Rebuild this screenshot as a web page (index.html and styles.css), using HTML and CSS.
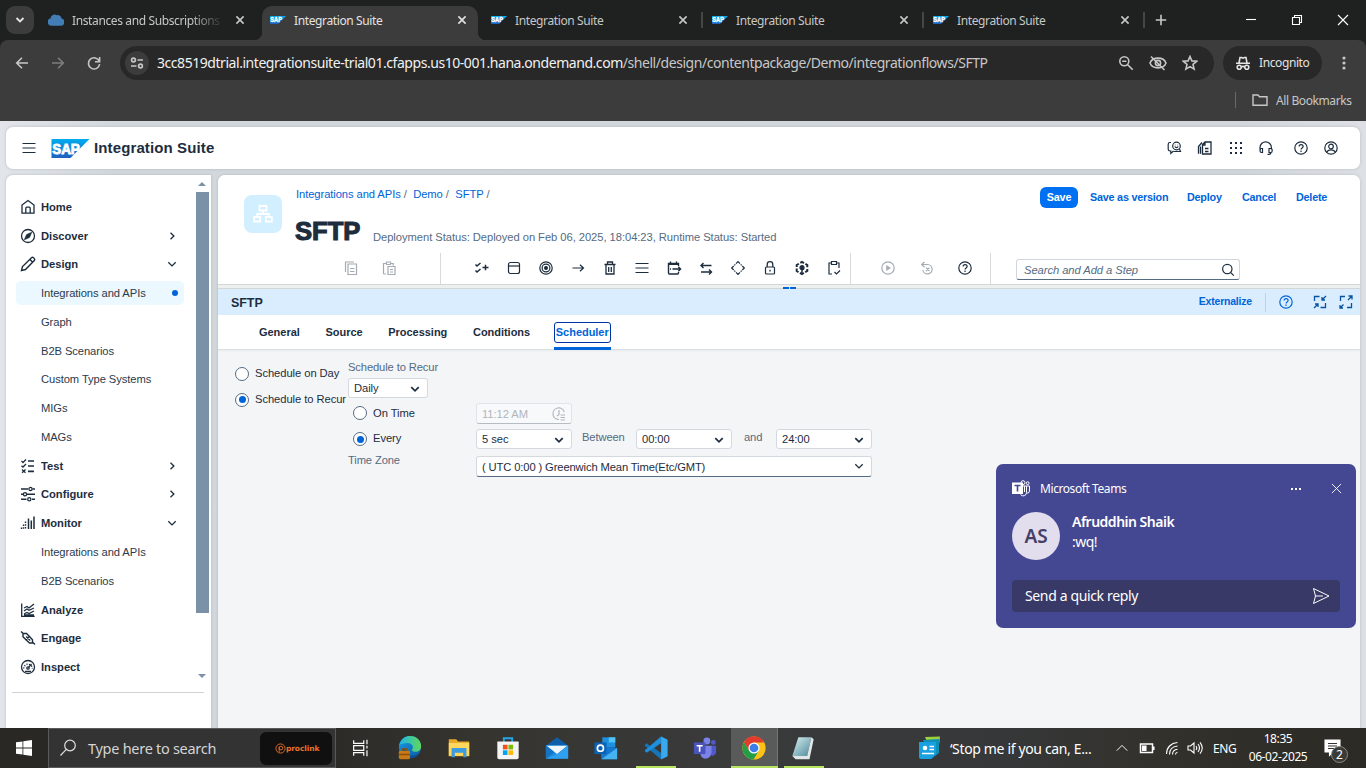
FILE: index.html
```html
<!DOCTYPE html>
<html lang="en">
<head>
<meta charset="utf-8">
<title>Integration Suite</title>
<link rel="stylesheet" href="styles.css">
</head>
<body>
<svg class="defs" aria-hidden="true">
  <defs>
    <linearGradient id="sapg" x1="0" y1="0" x2="0" y2="1"><stop offset="0" stop-color="#00aeef"/><stop offset="1" stop-color="#1f5fbf"/></linearGradient>
    <linearGradient id="edgeg" x1="0" y1="0" x2="1" y2="1"><stop offset="0" stop-color="#1b9de2"/><stop offset="1" stop-color="#0c59a4"/></linearGradient>
    <linearGradient id="edgeg2" x1="0" y1="0" x2="1" y2="0"><stop offset="0" stop-color="#1fb6e8"/><stop offset="1" stop-color="#5fd85a"/></linearGradient>
    <linearGradient id="padg" x1="0" y1="0" x2="1" y2="1"><stop offset="0" stop-color="#d9f0f4"/><stop offset="1" stop-color="#4d8a99"/></linearGradient>
  </defs>
  <symbol id="sap" viewBox="0 0 38 19"><path d="M0 0h38L19 19H0z" fill="url(#sapg)"/><text x="0.8" y="15" font-family="Liberation Sans" font-weight="700" font-size="15.5" textLength="27.500" lengthAdjust="spacingAndGlyphs" fill="#fff" stroke="#fff" stroke-width=".9">SAP</text></symbol>
  <symbol id="x" viewBox="0 0 16 16"><path d="M4.400 4.400l7.200 7.200M11.600 4.400l-7.200 7.200"/></symbol>
  <symbol id="down" viewBox="0 0 16 16"><path d="M4.300 6.200l3.700 3.700 3.700-3.700"/></symbol>
  <symbol id="right" viewBox="0 0 16 16"><path d="M6.500 4.700L9.900 8 6.500 11.300"/></symbol>
  <symbol id="help" viewBox="0 0 16 16"><circle cx="8" cy="8" r="6.200"/><path d="M6.100 6.500c0-2.600 4-2.500 4-.1 0 1.500-2 1.500-2 3M8 10.600v1.300"/></symbol>
</svg>

<header class="browser">
  <div class="tabstrip">
    <button class="tabsearch"><svg class="i" viewBox="0 0 16 16"><path d="M4.500 6l3.500 3.500L11.500 6"/></svg></button>
    <div class="tab first"><svg class="fav" viewBox="0 0 16 16"><path d="M3.500 13.800a3.800 3.800 0 0 1-.9-7.500A4 4 0 0 1 8.800 3.200a3.700 3.700 0 0 1 4.700 3.300A3.700 3.700 0 0 1 13 13.800z" fill="#437db5"/></svg><span class="ttl fade">Instances and Subscriptions -</span><svg class="i cx"><use href="#x"/></svg></div>
    <div class="tab active"><svg class="fav"><use href="#sap"/></svg><span class="ttl">Integration Suite</span><svg class="i cx"><use href="#x"/></svg></div>
    <div class="tab sep"><svg class="fav"><use href="#sap"/></svg><span class="ttl">Integration Suite</span><svg class="i cx"><use href="#x"/></svg></div>
    <div class="tab sep"><svg class="fav"><use href="#sap"/></svg><span class="ttl">Integration Suite</span><svg class="i cx"><use href="#x"/></svg></div>
    <div class="tab sep"><svg class="fav"><use href="#sap"/></svg><span class="ttl">Integration Suite</span><svg class="i cx"><use href="#x"/></svg></div>
    <svg class="i plus" viewBox="0 0 16 16"><path d="M8 2.800v10.400M2.800 8h10.400"/></svg>
    <div class="winctl">
      <svg viewBox="0 0 16 16"><path d="M3 7.500h10"/></svg>
      <svg viewBox="0 0 16 16"><path d="M3.500 5.500h7v7h-7zM5.500 5.500v-2h7v7h-2"/></svg>
      <svg viewBox="0 0 16 16"><path d="M3 3l10 10M13 3L3 13"/></svg>
    </div>
  </div>
  <div class="toolbar">
    <svg class="i nav" viewBox="0 0 16 16"><path d="M14 8H3M8 2.700L2.700 8 8 13.300"/></svg>
    <svg class="i nav dim" viewBox="0 0 16 16"><path d="M2 8h11M8 2.700L13.300 8 8 13.300"/></svg>
    <svg class="i nav" viewBox="0 0 16 16"><path d="M13.300 6.500A5.600 5.600 0 1 0 13.600 9M13.600 2v4.800H9"/></svg>
    <div class="omni">
      <span class="site"><svg class="i" viewBox="0 0 16 16"><circle cx="4.500" cy="5" r="1.900"/><path d="M8.500 5H14M2 11h5.500"/><circle cx="11.500" cy="11" r="1.900"/></svg></span>
      <span class="url"><b>3cc8519dtrial.integrationsuite-trial01.cfapps.us10-001.hana.ondemand.com</b>/shell/design/contentpackage/Demo/integrationflows/SFTP</span>
      <svg class="i" viewBox="0 0 16 16"><circle cx="6.300" cy="6.300" r="4.500"/><path d="M9.700 9.700l5 5M4.200 6.300h4.200"/></svg>
      <svg class="i eye" viewBox="0 0 18 16"><path d="M1 8c2.500-6.500 13.500-6.500 16 0-2.500 6.500-13.500 6.500-16 0z"/><circle cx="9" cy="8" r="2.600"/><path d="M2 1.500l13.500 13.500"/></svg>
      <svg class="i" viewBox="0 0 16 16"><path d="M8 1.500l1.900 4.400 4.700.4-3.600 3.100 1.100 4.700L8 11.600l-4.100 2.500L5 9.400 1.400 6.300l4.700-.4z"/></svg>
    </div>
    <div class="incog"><svg class="i" viewBox="0 0 16 16"><path d="M1 8.200h14M4 8l1-5.500h1.500l1.500.7 1.500-.7H11L12 8M6.200 12.200c1-.9 2.600-.9 3.600 0"/><circle cx="4.200" cy="12.300" r="2"/><circle cx="11.800" cy="12.300" r="2"/></svg><span>Incognito</span></div>
    <svg class="dots" viewBox="0 0 16 16"><circle cx="8" cy="3" r="1.600"/><circle cx="8" cy="8" r="1.600"/><circle cx="8" cy="13" r="1.600"/></svg>
  </div>
  <div class="bookmarks"><i></i><svg class="i" viewBox="0 0 16 16"><path d="M1 3v10.200h14V4.700H7.500L6 3z"/></svg><span>All Bookmarks</span></div>
</header>

<div class="app">
  <div class="shell">
    <svg class="s" viewBox="0 0 16 16"><path d="M1.500 3.500h13M1.500 8h13M1.500 12.500h13"/></svg>
    <svg class="logo"><use href="#sap"/></svg>
    <h1>Integration Suite</h1>
    <div class="shellicons">
      <svg class="s" viewBox="0 0 16 16"><path d="M4 2.500H3a1.800 1.800 0 0 0-1.800 1.800v5A1.800 1.800 0 0 0 3 11h.800v2.500L6.500 11"/><circle cx="9.500" cy="6" r="3.800"/><path d="M7.800 6.500c.8 1.500 2.600 1.500 3.400 0M8.300 4.800v.4M10.700 4.800v.4M6.500 11.500h7l-1-2.500"/></svg>
      <svg class="s" viewBox="0 0 16 16"><path d="M8 2H14v12H5.500V4.500zM8 2v3H5.500M1.500 13.800V6.500L5 2.500M3.500 13.800V6.500M8 8.500H11.500M8 11.500H11.500" stroke-width="1.300"/></svg>
      <svg class="s fillonly" viewBox="0 0 16 16"><path d="M2 2h2v2H2zM7 2h2v2H7zM12 2h2v2H12zM2 7h2v2H2zM7 7h2v2H7zM12 7h2v2H12zM2 12h2v2H2zM7 12h2v2H7zM12 12h2v2H12z"/></svg>
      <svg class="s" viewBox="0 0 16 16"><path d="M2 9.500V7.500a5.700 5.700 0 0 1 11.400 0v2M2.500 8.500h2v4h-1c-1 0-1.500-.8-1.500-2zM13 8.500h-2v4h2c1 0 1.200-.8 1.200-2s-.2-2-1.200-2zM13 12.500c0 1.500-1.500 2-3.500 2"/></svg>
      <svg class="s gap"><use href="#help"/></svg>
      <svg class="s" viewBox="0 0 16 16"><circle cx="8" cy="8" r="6.200"/><circle cx="8" cy="6.500" r="2.300"/><path d="M3.800 12.200c.8-2 2-2.400 4.200-2.400s3.400.4 4.200 2.400"/></svg>
    </div>
  </div>

  <div class="cols">
    <aside class="side">
      <nav>
        <a class="top"><svg class="s" viewBox="0 0 16 16"><path d="M2 14.200V6L8 1.500 14 6v8.200zM5.800 14V9.200q0-1 1-1h2.400q1 0 1 1V14"/></svg>Home</a>
        <a class="top"><svg class="s" viewBox="0 0 16 16"><circle cx="8" cy="8" r="6.500"/><path d="M11.800 4.200L9.500 9.500 4.300 11.800l2.300-5.300z" fill="currentColor" stroke-width=".6"/></svg>Discover<svg class="s ch"><use href="#right"/></svg></a>
        <a class="top"><svg class="s" viewBox="0 0 16 16"><path d="M1.500 14.500l1-4L11.500 1.800q1-.9 2 0l.8.800q.8 1 0 2L5.500 13.500zM10 3.500l2.700 2.700" stroke-width="1.400"/></svg>Design<svg class="s ch"><use href="#down"/></svg></a>
        <a class="sub on">Integrations and APIs<i></i></a>
        <a class="sub">Graph</a>
        <a class="sub">B2B Scenarios</a>
        <a class="sub">Custom Type Systems</a>
        <a class="sub">MIGs</a>
        <a class="sub">MAGs</a>
        <a class="top"><svg class="s" viewBox="0 0 16 16"><path d="M1.500 3l1.500 1.500L6 1.500M1.500 7.700L3 9l3-3M2 11.500l3.500 3.200M5.500 11.500L2 14.700" /><path d="M8 3h6M8 8h6M8 13.300h6" stroke-width="1.700"/></svg>Test<svg class="s ch"><use href="#right"/></svg></a>
        <a class="top"><svg class="s" viewBox="0 0 16 16"><path d="M1 3h7M12.500 3H15M1 8.300h2M7 8.300h8M1 13.300h5.500M12 13.300h3" stroke-width="1.400"/><circle cx="10.500" cy="3" r="1.600"/><circle cx="5" cy="8.300" r="1.600"/><circle cx="9.300" cy="13.300" r="1.600"/></svg>Configure<svg class="s ch"><use href="#right"/></svg></a>
        <a class="top"><svg class="s" viewBox="0 0 16 16"><path d="M14 1.500v12.500M11.300 5.500v8.500M8.500 3.500v10.500" stroke-width="1.500"/><path d="M5.500 6.500v8M3.500 9.500v5M1.500 12.500v2" stroke-dasharray="1.500 1.200" stroke-width="1.400"/></svg>Monitor<svg class="s ch"><use href="#down"/></svg></a>
        <a class="sub">Integrations and APIs</a>
        <a class="sub">B2B Scenarios</a>
        <a class="top"><svg class="s" viewBox="0 0 16 16"><path d="M1.700 1.500v12.800h13M4 6l3-1.500 2 1.500 5-4M4 9l3-2 2 1.300L14 6M4 12l3-1.500 2 1 5-2.500M4 13h10"/></svg>Analyze</a>
        <a class="top"><svg class="s" viewBox="0 0 16 16"><path d="M1 1.500l2.500 2.300M12.500 12l2.500 2.500M3 6.800V3.500h3.500l3 3-3.500 3.300zM6 9.800l3.500 3.200h3V9.700L9.500 6.500M6.200 6.500l4 4" stroke-width="1.400"/></svg>Engage</a>
        <a class="top"><svg class="s" viewBox="0 0 16 16"><circle cx="8" cy="8" r="6.500"/><circle cx="8" cy="9" r="1.200"/><path d="M8.800 8.200L11.500 5M5 12.300h6" /><path d="M3.700 9.500a4.300 4.300 0 0 1 8.600 0" stroke-dasharray="1.200 1.300"/></svg>Inspect</a>
      </nav>
      <div class="scroll"><b class="up"></b><b class="thumb"></b><b class="dn"></b></div>
      <hr>
    </aside>

    <main class="main">
      <section class="objhead">
        <div class="tile"><svg viewBox="0 0 20 20"><path d="M6.500 2h7v4.500h-7zM1.200 13h6v4.500h-6zM12.800 13h6v4.500h-6zM10 6.500V10M4.200 13v-3h11.600v3"/></svg></div>
        <div class="titles">
          <div class="crumb"><a>Integrations and APIs</a><em>/</em><a>Demo</a><em>/</em><a>SFTP</a><em>/</em></div>
          <div class="title"><h2>SFTP</h2><span>Deployment Status: Deployed on Feb 06, 2025, 18:04:23, Runtime Status: Started</span></div>
        </div>
        <div class="actions"><a class="save">Save</a><a class="w1">Save as version</a><a class="w2">Deploy</a><a class="w3">Cancel</a><a class="w4">Delete</a></div>
      </section>
      <section class="tools">
        <div class="g1">
          <svg class="s" viewBox="0 0 16 16"><path d="M5 4h8.500v10.500H5zM2.500 12V2h8.500M7 8.500h4.500M7 11.500h4.500"/></svg>
          <svg class="s" viewBox="0 0 16 16"><path d="M2.500 14V3.500h2.800M5.500 2h4v2.500h-4zM9.700 3.500h2.500v2M7 6.500h7v8H7zM9 9.500h3M9 12h3M2.500 14H5"/></svg>
        </div>
        <div class="g2">
          <svg class="s" viewBox="0 0 16 16"><path d="M1.500 4.500L3 6l3.500-3M1.500 10.500L3 12l3.500-3M8.500 7.500h6M11.500 4.800v5.400" stroke-width="1.500"/></svg>
          <svg class="s" viewBox="0 0 16 16"><rect x="2.500" y="2.500" width="11" height="11" rx="2"/><path d="M2.500 6h11"/></svg>
          <svg class="s" viewBox="0 0 16 16"><circle cx="8" cy="8" r="6.200"/><circle cx="8" cy="8" r="3.900"/><circle cx="8" cy="8" r="1.400" fill="currentColor"/></svg>
          <svg class="s" viewBox="0 0 16 16"><path d="M2.500 8h11M10 4.700L13.500 8 10 11.300"/></svg>
          <svg class="s" viewBox="0 0 16 16"><path d="M2.500 4.500h11M5.500 4.500v-2.500h5v2.500M4 4.500v9.500h8V4.500M6.700 7v5M9.300 7v5" stroke-width="1.300"/></svg>
          <svg class="s" viewBox="0 0 16 16"><path d="M1.500 3.500h13M1.500 8h13M1.500 12.500h13"/></svg>
          <svg class="s" viewBox="0 0 16 16"><path d="M12.500 6V3.500H2.500v9.500q0 1 1 1h8q1 0 1-1v-1M2.500 4.300h10M4.500 1.500v2M10.500 1.500v2M4 9h1M6.500 9h8M12.300 6.700L14.600 9l-2.300 2.300" stroke-width="1.400"/></svg>
          <svg class="s" viewBox="0 0 16 16"><path d="M13.500 5.500H3M5.500 3L3 5.500 5.500 8M3 12h10.500M11 9.500l2.500 2.500L11 14.500" stroke-width="1.400"/></svg>
          <svg class="s" viewBox="0 0 16 16"><path d="M6 3.700l2-2 2 2M12.300 6l2 2-2 2M10 12.300l-2 2-2-2M3.700 10l-2-2 2-2M5.300 4.400L4.400 5.300M10.700 4.400l.9.900M5.300 11.600l-.9-.9M10.700 11.600l.9-.9"/></svg>
          <svg class="s" viewBox="0 0 16 16"><rect x="3.500" y="7" width="9" height="7" rx="1"/><path d="M5.200 7V4.500a2.800 2.800 0 0 1 5.600 0V7M8 9.700v1.700" stroke-width="1.300"/></svg>
          <svg class="s" viewBox="0 0 16 16"><path d="M8 2l5.300 3v6L8 14l-5.300-3V5z" stroke-dasharray="4.500 1.600" stroke-dashoffset="2.200" stroke-width="2"/><circle cx="8" cy="7.700" r="2" fill="currentColor"/><path d="M8 10v3" stroke-width="1.500"/></svg>
          <svg class="s" viewBox="0 0 16 16"><path d="M6 14H3V3h2.500M10.500 3H13v5M5.500 1.500h5v3h-5zM8.500 12l2 2 3.500-3.500"/></svg>
        </div>
        <div class="g3">
          <svg class="s" viewBox="0 0 16 16"><circle cx="8" cy="8" r="6.200"/><path d="M6.500 5.500v5L10.500 8z" fill="currentColor" stroke-width=".6"/></svg>
          <svg class="s" viewBox="0 0 16 16"><path d="M3.500 4.500h5a4.700 4.700 0 1 1-4.700 5.500M5.500 2L2.700 4.500l2.800 2.700M7 7.700l3.500 3.500M10.500 7.700L7 11.200"/></svg>
          <svg class="s dark"><use href="#help"/></svg>
        </div>
        <div class="search"><span>Search and Add a Step</span><svg class="s" viewBox="0 0 16 16"><circle cx="7.300" cy="7" r="4.700"/><path d="M10.800 10.600l3 3"/></svg></div>
      </section>
      <div class="split"><i></i></div>
      <section class="phead"><b>SFTP</b><a>Externalize</a><i></i>
        <svg class="s"><use href="#help"/></svg>
        <svg class="s c" viewBox="0 0 16 16"><path d="M7.500 2.500H2.500V7M8.500 13.500h5V9M14 2L10 6M10 3v3h3M2 14L6 10M3 10H6v3" stroke-width="1.300"/></svg>
        <svg class="s d" viewBox="0 0 16 16"><path d="M7 2.500H2.500V7M9 13.500h4.500V9M10 6l4-4M10.500 2h3.500v3.500M5.500 10.500L2 14M2 11v3h3" stroke-width="1.300"/></svg>
      </section>
      <section class="ptabs"><a>General</a><a>Source</a><a>Processing</a><a>Conditions</a><a class="cur">Scheduler</a></section>
      <section class="form">
        <div class="modes"><label><i class="radio"></i><span>Schedule on Day</span></label><label><i class="radio on"></i><span>Schedule to Recur</span></label></div>
        <div class="recur">
          <div class="lbl r0">Schedule to Recur</div>
          <div class="sel daily">Daily<svg class="s"><use href="#down"/></svg></div>
          <div class="row r1"><label><i class="radio"></i>On Time</label><div class="time">11:12 AM<svg class="s" viewBox="0 0 16 16"><path d="M8 13.500A5.800 5.800 0 1 1 13.300 6M8 4v4.500L6 10M9.500 9H14M9.500 11.500H14M9.500 14H14"/></svg></div></div>
          <div class="row r2"><label><i class="radio on"></i><span>Every</span></label><div class="sel">5 sec<svg class="s"><use href="#down"/></svg></div><span class="lbl bt">Between</span><div class="sel">00:00<svg class="s"><use href="#down"/></svg></div><span class="lbl an">and</span><div class="sel">24:00<svg class="s"><use href="#down"/></svg></div></div>
          <div class="row r3"><span class="lbl tz">Time Zone</span><div class="sel zone">( UTC 0:00 ) Greenwich Mean Time(Etc/GMT)<svg class="s"><use href="#down"/></svg></div></div>
        </div>
      </section>
    </main>
  </div>
</div>

<div class="toast">
  <div class="thead"><svg class="tm" viewBox="0 0 18 17"><circle cx="11" cy="2.700" r="2" fill="none" stroke="#fff"/><circle cx="15.700" cy="3.200" r="1.400" fill="none" stroke="#fff"/><path d="M11 6h3.500v6.500a3.300 3.300 0 0 1-6 2M14.500 6H17.500V11q0 2-2.500 2.200M12.500 6v6" fill="none" stroke="#fff"/><path d="M0 2.500h11v11.500H0z" fill="#fff"/><path d="M2.500 5.500h6M5.500 5.500v6" stroke="#444791" stroke-width="1.600"/></svg><span>Microsoft Teams</span><em><u></u><u></u><u></u></em><svg class="tx" viewBox="0 0 12 12"><path d="M1 1l10 10M11 1L1 11"/></svg></div>
  <div class="tbody"><div class="av">AS</div><div class="msg"><b>Afruddhin Shaik</b><span>:wq!</span></div></div>
  <div class="reply"><span>Send a quick reply</span><svg viewBox="0 0 18 18"><path d="M1.500 1.500L17 9 1.500 16.500 3.500 9zM3.500 9H11"/></svg></div>
</div>

<footer class="taskbar">
  <div class="start"><svg viewBox="0 0 16 16"><path d="M0 2.300l6.500-.9v6.100H0zM7.300 1.300L16 0v7.500H7.300zM0 8.400h6.500v6.200L0 13.700zM7.300 8.400H16V16l-8.700-1.300z" fill="#fff"/></svg></div>
  <div class="tsearch"><svg viewBox="0 0 18 18"><circle cx="11" cy="6.500" r="5.300"/><path d="M7.300 10.400L1.500 16.500"/></svg><span>Type here to search</span><div class="pro"><svg viewBox="0 0 12 12"><circle cx="6" cy="6" r="5"/><circle cx="6.500" cy="5.500" r="2"/><path d="M4.500 4v6"/></svg>proclink</div></div>
  <div class="apps">
    <div class="app-i"><svg viewBox="0 0 24 24"><path d="M4 3.500v3.500h11V3.500M4 20.500V17h11v3.500M4 9.500h11v5H4zM18.500 3v5M18.500 14.500V21M18.500 9.500v3" fill="none" stroke="#fff" stroke-width="1.300"/></svg></div>
    <div class="app-i"><svg viewBox="0 0 28 28"><circle cx="14" cy="13" r="12" fill="url(#edgeg)"/><path d="M2.500 11C4 3.500 10 1 14.500 1 21 1 26 6 26 12c0 4-3 6-6 6-3.500 0-4.500-1.500-3.500-3 2-3-1-6.500-5-6.500-4 0-7.500 1-9 2.500z" fill="url(#edgeg2)"/><path d="M9 15c0 5 4 7.500 9 7 2 0 4-1 5-2-1 3-5 5-9 5-6 0-9-5-8-9z" fill="#0b4f94"/><rect x="2" y="17" width="12" height="9" rx="1.500" fill="#c97a16"/><path d="M5.500 17v-2h5v2M2 21h12" stroke="#8b4f09" fill="none" stroke-width="1.500"/></svg></div>
    <div class="app-i"><svg viewBox="0 0 28 28"><path d="M3 4.500h8l2 2.500h12v16H3z" fill="#e9a825"/><path d="M3 8.500h22v14H3z" fill="#ffd75e"/><path d="M6 14h16v10h-3.500v-5h-9v5H6z" fill="#3d9be0"/></svg></div>
    <div class="app-i"><svg viewBox="0 0 28 28"><path d="M9.500 8V3.500h9V8" fill="none" stroke="#24a7e8" stroke-width="2"/><path d="M2.500 7h23v17q0 2-2 2h-19q-2 0-2-2z" fill="#f4f4f4"/><path d="M8.500 10.500h5v5h-5z" fill="#f25022"/><path d="M14.500 10.500h5v5h-5z" fill="#7fba00"/><path d="M8.500 16.500h5v5h-5z" fill="#00a4ef"/><path d="M14.500 16.500h5v5h-5z" fill="#ffb900"/></svg></div>
    <div class="app-i"><svg viewBox="0 0 28 28"><path d="M2 11.500L14 2.500l12 9z" fill="#0c5ea8"/><path d="M2 11v14.500h24V11z" fill="#1b8ae0"/><path d="M3 11.500h22L14 20.500z" fill="#eef5fb"/><path d="M2 11.500l9 7L2 25.500z" fill="#1673c4"/><path d="M14 20.500l12-9v14H2z" fill="#35a5f2" opacity=".8"/></svg></div>
    <div class="app-i"><svg viewBox="0 0 28 28"><path d="M10 2.500h14v11H10z" fill="#1e90df"/><path d="M17 2.500h7v5.500h-7z" fill="#50c4f7"/><path d="M8 12l18 2v12H9z" fill="#1478cf"/><path d="M9 26l17-12v12z" fill="#45b2f2"/><path d="M1.500 8h13v12.500h-13z" fill="#0a63b5"/><circle cx="8" cy="14.200" r="3.300" fill="none" stroke="#fff" stroke-width="1.800"/></svg></div>
    <div class="app-i run"><svg viewBox="0 0 28 28"><path d="M19.500 1.500L8 12 4 9 2 10.500v1L19.500 26.500v-7L12 14l7.500-5.500z" fill="#1674b8"/><path d="M2 17.500L4 19l15.500-10.500V1.500L2 16.500z" fill="#1e8fd8"/><path d="M19.500 1.500L26.500 5v18l-7 3.500z" fill="#38a9ef"/></svg></div>
    <div class="app-i"><svg viewBox="0 0 28 28"><circle cx="16" cy="6.500" r="3.700" fill="#7b83eb"/><circle cx="23" cy="8" r="2.600" fill="#5059c9"/><path d="M19 11.500h7v7q-1 4-5 4z" fill="#5059c9"/><path d="M9 11.500h12v8q-1 6-7 6-5-1-5-6z" fill="#7b83eb"/><path d="M2 8h12.500v12.500H2z" fill="#4b53bc"/><path d="M5 11.500h6.500M8.200 11.500v6.500" stroke="#fff" stroke-width="1.700"/></svg></div>
    <div class="app-i run focus"><svg viewBox="0 0 28 28"><circle cx="14" cy="14" r="12.500" fill="#fbc116"/><path d="M14 8h11A12.500 12.500 0 0 0 3.200 7.700l5.600 9.300z" fill="#e33b2e"/><path d="M3.200 7.700A12.500 12.500 0 0 0 13.500 26.500l5.700-9.500h-10.400z" fill="#229e47"/><circle cx="14" cy="14" r="6" fill="#fff"/><circle cx="14" cy="14" r="4.700" fill="#3b7de9"/></svg></div>
    <div class="app-i run"><svg viewBox="0 0 28 28"><path d="M9 2.500h14l-4.500 20H2.500z" fill="url(#padg)"/><path d="M23 2.500l2.500 2L21 26l-2.500-3.500zM2.500 22.500h16L21 26H6z" fill="#e0e6e8"/></svg></div>
  </div>
  <div class="news"><svg viewBox="0 0 24 24"><path d="M7 1l15-.5-2 17-5 2z" fill="#9ed23c"/><path d="M5 4l16-1v14l-8 6z" fill="#0f8fb8"/><path d="M1 6h17v12l-5 5H3q-2 0-2-2z" fill="#18a0e0"/><circle cx="7" cy="12" r="2.300" fill="#fff"/><path d="M11.500 10.500H16M11.500 13.500H16M4 17.500h12" stroke="#fff" stroke-width="1.500"/></svg><span>‘Stop me if you can, E...</span></div>
  <div class="tray">
    <svg class="a" viewBox="0 0 16 16"><path d="M2 11l6-6 6 6"/></svg>
    <svg class="b" viewBox="0 0 16 16"><path d="M1.500 4h12v8.500H1.500zM14.800 6.500v3.500" stroke-width="1.500"/><path d="M3.500 6h3.500v4.500H3.500z" fill="#fff"/></svg>
    <svg class="c" viewBox="0 0 16 16"><path d="M2.500 14C2.500 7.500 7 3 13.500 2.500M5.500 14.500c0-5 3-8 8-8.500M8.500 14.500c0-3 2-5 5-5.300M11.500 14.500c0-1.200.8-2 2-2.200"/></svg>
    <svg class="d" viewBox="0 0 16 16"><path d="M1 6v4h2.500L7 13V3L3.500 6zM9 6q1.500 2 0 4M11 4q3 4 0 8M13 2.300q4.500 5.700 0 11.400"/></svg>
    <span class="eng">ENG</span>
    <div class="clock"><span>18:35</span><span>06-02-2025</span></div>
    <div class="note"><svg viewBox="0 0 18 18"><path d="M1 1h15v12H9l-3.500 3.500V13H1z" fill="#fff"/><path d="M4 4.500h9M4 7h9M4 9.500h6" stroke="#333" stroke-width="1.100"/></svg><b>2</b></div>
  </div>
</footer>
</body>
</html>
```
FILE: styles.css
```css
* { box-sizing: border-box; }
body { margin: 0; width: 1366px; height: 768px; overflow: hidden; display: flex; flex-direction: column; font-family: "Liberation Sans", sans-serif; font-size: 11.2px; color: #1d2d3e; white-space: nowrap; }
svg { display: block; flex: none; }
a { color: inherit; text-decoration: none; }
.defs { width: 0; height: 0; position: absolute; }
.i { width: 16px; height: 16px; fill: none; stroke: #c7c7c7; stroke-width: 1.6; }
.s { width: 16px; height: 16px; fill: none; stroke: currentColor; stroke-width: 1.2; }

/* browser chrome */
.browser { height: 121px; background: #1f2120; font-family: "Noto Sans", sans-serif; color: #c7c7c7; flex: none; }
.tabstrip { height: 40px; display: flex; align-items: center; padding-left: 6px; }
.tabsearch { width: 28px; height: 28px; border: 0; border-radius: 9px; background: #3c3c3c; padding: 6px; margin-right: 7px; }
.tabsearch .i { stroke: #e3e3e3; stroke-width: 1.9; }
.tab { width: 221px; height: 40px; display: flex; align-items: center; padding-left: 8px; position: relative; }
.first .fav { margin-left: -1px; }
.fav { width: 16px; height: 16px; margin-right: 8px; }
.ttl { width: 152px; font-size: 12px; letter-spacing: -.38px; margin-right: 8px; }
.fade { -webkit-mask-image: linear-gradient(90deg, #000 78%, transparent 100%); }
.cx { width: 16px; height: 16px; }
.active .ttl { color: #e3e3e3; }
.active .cx { stroke: #e3e3e3; }
.active::before { content: ""; position: absolute; left: 0; top: 6px; width: 216px; height: 34px; background: #3c3c3c; border-radius: 10px 10px 0 0; }
.active::after { content: ""; position: absolute; left: -8px; top: 32px; width: 232px; height: 8px; background: radial-gradient(circle at 0 0, transparent 8px, #3c3c3c 8.500px) left / 8px 8px no-repeat, radial-gradient(circle at 100% 0, transparent 8px, #3c3c3c 8.500px) right / 8px 8px no-repeat; }
.active > * { position: relative; z-index: 1; }
.sep::after { content: ""; position: absolute; left: 218px; top: 12px; width: 1.500px; height: 16px; background: #454746; }
.plus { margin-left: 7px; }
.winctl { margin-left: auto; display: flex; gap: 30px; padding-right: 15px; }
.winctl svg { width: 16px; height: 16px; fill: none; stroke: #fff; stroke-width: 1.1; }
.toolbar { height: 46px; background: #3c3c3c; border-radius: 8px 8px 0 0; display: flex; align-items: center; padding-left: 14px; }
.nav { margin-right: 20px; }
.dim { stroke: #7d7d7d; }
.omni { margin-left: -2px; width: 1094px; height: 34px; border-radius: 17px; background: #282828; display: flex; align-items: center; padding-left: 5px; gap: 16px; }
.site { width: 24px; height: 24px; border-radius: 12px; background: #3c3c3c; padding: 4px; margin-right: -8px; }
.url { font-size: 14px; width: 953px; letter-spacing: -.45px; margin-right: -8px; padding-bottom: 2px; }
.url b { font-weight: 400; color: #f1f1f1; }
.omni .eye { width: 18px; margin: 0 -1px; }
.incog { margin-left: 9px; width: 99px; height: 34px; border-radius: 17px; background: #282828; display: flex; align-items: center; gap: 8px; padding-left: 12px; font-size: 12px; color: #e3e3e3; }
.incog span { letter-spacing: -.4px; padding-bottom: 2px; }
.incog .i { stroke: #e3e3e3; }
.dots { width: 16px; height: 16px; margin-left: 14px; fill: #c7c7c7; }
.bookmarks { height: 35px; background: #3c3c3c; display: flex; align-items: center; justify-content: flex-end; padding: 0 15px 7px 0; font-size: 12px; }
.bookmarks i { width: 1.500px; height: 16px; background: #6a6a6a; margin-right: 16px; }
.bookmarks .i { margin-right: 8px; stroke-width: 1.4; }
.bookmarks span { width: 75px; letter-spacing: -.4px; }

/* application */
.app { height: 607px; background: linear-gradient(90deg, #e2e5e9 0, #d3d8dc 120px, #d3d7db 1240px, #dde1e5 100%); padding: 6px 6px 0; overflow: hidden; flex: none; letter-spacing: -.06px; }
.shell { height: 42px; background: #fff; border-radius: 7px; box-shadow: 0 0 3px rgba(34,53,72,.22); display: flex; align-items: center; padding-left: 15px; }
.logo { width: 39px; height: 19px; margin-left: 14px; }
.shell h1 { margin: 0 0 0 4px; font-size: 15px; line-height: 20px; letter-spacing: .12px; }
.shellicons { margin-left: auto; display: flex; gap: 14.500px; padding-right: 21px; }
.shellicons .gap { margin-left: 4px; }
.shellicons .fillonly { fill: currentColor; stroke: none; }
.cols { display: flex; gap: 7px; margin-top: 6px; height: 553px; }
.side { width: 205px; background: #fff; border-radius: 7px 0 0 0; box-shadow: 0 0 3px rgba(34,53,72,.22); display: grid; grid-template-columns: 190px 15px; grid-template-rows: 502px 60px; }
.side nav { padding-top: 17.400px; }
.side a { height: 28.780px; display: flex; align-items: center; position: relative; }
.top { padding-left: 14px; font-weight: 700; letter-spacing: -.02px; }
.top > .s:first-child { margin-right: 5px; stroke-width: 1.3; }
.side .ch { margin-left: auto; margin-right: 16.500px; stroke-width: 1.300; }
.side .sub { padding-left: 25px; margin-left: 10px; width: 168px; border-radius: 5px; font-size: 11.200px; letter-spacing: -.08px; color: #2b3a4a; }
.side .on { height: 24.800px; margin-top: 2px; margin-bottom: 2px; background: #ebf8ff; }
.on > i:last-child { margin-left: auto; margin-right: 6.500px; width: 6px; height: 6px; border-radius: 50%; background: #0064d9; }
.scroll { height: 506px; padding-top: 7px; display: flex; flex-direction: column; align-items: center; width: 13px; }
.scroll .up { border: 4px solid transparent; border-top: 0; border-bottom-color: #7b91a8; margin-bottom: 6px; margin-right: 1px; }
.scroll .thumb { width: 13px; height: 421px; background: #7b91a8; margin-bottom: 61px; }
.scroll .dn { border: 4px solid transparent; border-bottom: 0; border-top-color: #7b91a8; margin-right: 1px; }
.side hr { width: 192px; height: 1px; border: 0; background: #d0d3d6; margin: 15px 0 0 6px; }
.main { width: 1142px; background: #f4f5f7; border-radius: 7px 7px 0 0; box-shadow: 0 0 3px rgba(34,53,72,.22); overflow: hidden; }
.objhead { height: 78px; background: #fff; display: flex; }
.tile { width: 38px; height: 38px; border-radius: 8px; background: #d1efff; margin: 20px 13px 0 26px; padding: 9px; }
.tile svg { width: 20px; height: 20px; fill: none; stroke: #fff; stroke-width: 1.8; }
.crumb { margin: 12px 0 0 1px; display: flex; line-height: 14px; color: #0064d9; letter-spacing: -.08px; }
.crumb em { font-style: normal; color: #556b82; margin: 0 6.500px 0 3px; }
.title { display: flex; margin-top: 14px; align-items: baseline; }
.title h2 { margin: 0; font-size: 25.600px; line-height: 32px; -webkit-text-stroke: 1.1px #1d2d3e; width: 78px; letter-spacing: 0; }
.title span { color: #556b82; letter-spacing: -.05px; position: relative; top: 1px; }
.actions { margin: 12px 32px 0 auto; display: flex; height: 21px; line-height: 21px; font-weight: 700; color: #0064d9; font-size: 10.800px; letter-spacing: -.22px; }
.save { width: 38px; background: #0070f2; color: #fff; border-radius: 6px; text-align: center; margin-right: 12px; }
.w1 { width: 97px; } .w2 { width: 55px; } .w3 { width: 54px; } .w4 { width: 32px; }
.tools { height: 31px; background: #fff; display: flex; color: #1d2d3e; }
.tools > div { display: flex; padding-top: 7px; }
.tools .g1 { width: 223px; padding-left: 125px; gap: 22px; color: #a5abb2; border-right: 1px solid #d9d9d9; padding-top: 7px; }
.tools .g2 { width: 410px; padding-left: 33px; gap: 16px; border-right: 1px solid #d9d9d9; padding-top: 6.500px; }
.tools .g3 { width: 140px; padding-left: 29px; gap: 22.500px; border-right: 1px solid #d9d9d9; color: #a5abb2; padding-top: 7px; }
.dark { color: #1d2d3e; }
.tools .search { width: 224px; height: 21px; margin: 6px 0 0 25px; border: 1px solid #d0d6dc; border-bottom-color: #556b82; border-radius: 3px; padding: 0 3px 0 7px; align-items: center; justify-content: space-between; font-style: italic; color: #556b82; }
.search .s { color: #1d2d3e; }
.split { height: 5px; background: #eef0f0; border-top: 1px solid #d4d6d6; border-bottom: 1px solid #d4d6d6; padding: 2px 0 0 565px; }
.split i { display: block; width: 13px; height: 2px; background: repeating-linear-gradient(90deg, #0064d9 0 2.700px, #cfe0f2 2.700px 3.400px); position: relative; }
.phead { height: 26px; background: #d9edff; display: flex; align-items: center; padding-left: 13px; }
.phead b { font-size: 12.500px; padding-top: 1px; }
.phead a { margin-left: auto; margin-right: 13px; color: #0064d9; font-weight: 700; font-size: 10.500px; line-height: 20px; padding-bottom: 2px; letter-spacing: -.2px; }
.phead i { width: 1px; height: 19px; background: #c4cfda; margin-right: 12px; }
.phead .s { color: #0064d9; }
.phead .c { margin: 0 10px 0 18px; color: #0854a0; }
.phead .d { margin-right: 6px; color: #0854a0; }
.ptabs { height: 35px; background: #fff; border-bottom: 1px solid #dcdfe2; display: flex; padding-left: 41px; font-weight: 700; gap: 25.700px; line-height: 15px; padding-top: 10px; box-shadow: 0 1px 2px rgba(0,0,0,.05); font-size: 11px; letter-spacing: -.03px; }
.ptabs .cur { color: #0064d9; outline: 1px solid #0032a5; outline-offset: 1px; border-radius: 1px; height: 17px; margin-top: -1px; line-height: 17px; position: relative; }
.ptabs .cur::after { content: ""; position: absolute; left: -2px; right: -2px; top: 23px; height: 3px; background: #0064d9; }
.form { display: flex; padding-top: 10px; }
.modes { width: 130px; padding: 6px 0 0 17px; }
.form label { display: flex; align-items: center; height: 16px; }
.form label span { padding-bottom: 2px; }
.modes label { margin-bottom: 9.500px; }
.radio { width: 14px; height: 14px; border: 1px solid #556b82; border-radius: 50%; background: #fff; margin-right: 6px; display: grid; place-items: center; }
.radio.on::after { content: ""; width: 7px; height: 7px; border-radius: 50%; background: #0064d9; }
.lbl { color: #556b82; line-height: 14px; letter-spacing: -.12px; }
.sel, .time { width: 96px; height: 20px; background: #fff; border: 1px solid #d3d9df; border-radius: 3px; display: flex; align-items: center; justify-content: space-between; padding: 0 4px 0 5px; }
.sel .s { stroke-width: 1.7; position: relative; top: 1px; }
.daily { width: 80px; margin-top: 4px; }
.time { height: 21px; background: #f8f9fa; color: #b0b6bd; border-color: #e2e5e8; border-bottom-color: #b5bcc4; }
.row { display: flex; }
.row label { width: 123px; margin-left: 5px; }
.r1 { margin-top: 5px; } .r1 label { margin-top: 2px; }
.r2 { margin-top: 5px; } .r2 label { margin-top: 2px; }
.r2 .lbl { padding: 1px 0 0; }
.bt { width: 64px; padding-left: 10px !important; }
.an { width: 44px; padding-left: 12px !important; }
.r3 { margin-top: 7px; }
.tz { width: 128px; margin-top: -3px; }
.zone { width: 396px; height: 21px; border-bottom-color: #556b82; letter-spacing: -.12px; }
.zone .s { stroke-width: 1.3; top: -1px; }

/* notification */
.toast { position: absolute; left: 996px; top: 464px; width: 360px; height: 164px; background: #444791; border-radius: 7px; color: #fff; font-family: "Noto Sans", sans-serif; padding: 16px; }
.thead { display: flex; align-items: center; height: 17px; font-size: 12px; }
.tm { width: 18px; height: 17px; margin-right: 10px; }
.thead span { letter-spacing: -.42px; }
.thead em { margin-left: auto; display: flex; gap: 2px; margin-right: 30px; }
.thead u { width: 2px; height: 2px; background: #fff; }
.tx { width: 11px; height: 11px; fill: none; stroke: #fff; stroke-width: 1; margin-right: -1.500px; }
.tbody { display: flex; margin-top: 15px; gap: 12px; }
.av { width: 48px; height: 48px; border-radius: 50%; background: #e2deee; color: #444066; font-weight: 600; font-size: 19px; line-height: 48px; text-align: center; }
.msg { display: flex; flex-direction: column; font-size: 14px; line-height: 20px; letter-spacing: -.5px; }
.msg b { font-weight: 600; }
.reply { height: 32px; margin-top: 20px; border-radius: 4px; background: #383966; display: flex; align-items: center; justify-content: space-between; padding: 0 10px 0 13px; font-size: 14px; letter-spacing: -.36px; }
.reply span { padding-bottom: 1px; }
.reply svg { width: 18px; height: 18px; fill: none; stroke: #fff; }

/* taskbar */
.taskbar { height: 40px; background: linear-gradient(90deg, #292824 0, #2c2b28 330px, #35342f 480px, #393a3a 720px, #36383a 980px, #33312c 1160px, #2b2a25 100%); display: flex; align-items: center; color: #fff; font-family: "Noto Sans", sans-serif; flex: none; }
.start { width: 48px; padding-left: 16px; }
.start svg { width: 16px; height: 16px; }
.tsearch { width: 288px; height: 40px; background: #333; border: 1px solid #5a5a5a; display: flex; align-items: center; padding: 0 3px 0 10px; font-size: 14.500px; color: #d4d4d4; letter-spacing: -.28px; }
.tsearch > svg { width: 18px; height: 18px; fill: none; stroke: #ddd; stroke-width: 1.2; margin-right: 11px; }
.pro { margin-left: auto; width: 72px; height: 33px; background: #101010; border-radius: 6px; color: #e8702a; font: 700 7.500px "DejaVu Sans", sans-serif; letter-spacing: -.1px; display: flex; align-items: center; padding-left: 15px; gap: 0; }
.pro svg { width: 11px; height: 11px; fill: none; stroke: #e8702a; }
.apps { display: flex; margin-left: 1px; width: 494px; }
.app-i { width: 47px; height: 40px; display: grid; place-items: center; margin-right: 2.200px; flex: none; position: relative; }
.app-i svg { width: 26px; height: 26px; }
.app-i:first-child svg { width: 22px; height: 22px; }
.run::after { content: ""; position: absolute; left: 4px; right: 3px; bottom: 0; height: 2px; background: #b8e55f; }
.focus { background: #595b5b; border-right: 1px solid #777; }
.focus::after { left: 0; right: -1px; }
.news { display: flex; align-items: center; gap: 8px; margin-left: 87px; width: 196px; font-size: 14px; letter-spacing: -.35px; }
.news svg { width: 24px; height: 24px; }
.tray { display: flex; align-items: center; font-size: 12px; }
.tray svg { width: 16px; height: 16px; fill: none; stroke: #fff; stroke-width: 1.1; }
.tray .a { width: 14px; margin-right: 10px; margin-left: 1px; }
.tray .b { margin-right: 9px; }
.tray .c { margin-right: 6px; }
.tray .d { margin-right: 9px; width: 18px; }
.eng { width: 29px; letter-spacing: -.4px; font-size: 12px; }
.clock { width: 72px; text-align: center; line-height: 18px; letter-spacing: -.4px; display: flex; flex-direction: column; }
.note { position: relative; margin-left: 10px; }
.note svg { width: 18px; height: 18px; }
.note b { position: absolute; left: 7px; top: 7px; width: 17px; height: 17px; border-radius: 50%; background: #3a3a36; border: 1px solid #8a8a85; font-weight: 400; font-size: 12px; line-height: 15px; text-align: center; }
```
